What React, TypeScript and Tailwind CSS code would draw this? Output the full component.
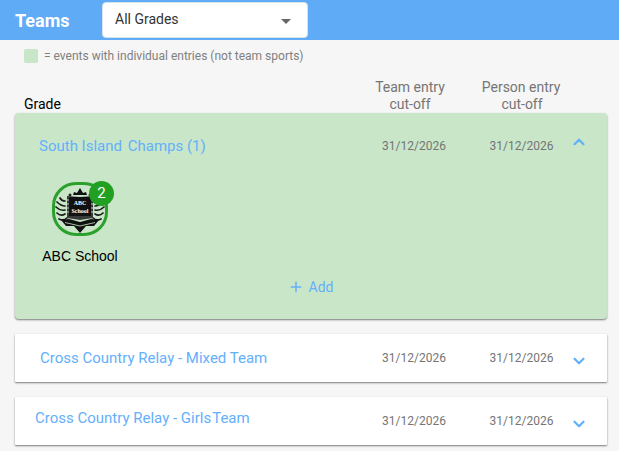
import React from "react";
import { ChevronDown, ChevronUp, Plus } from "lucide-react";

const Crest = () => (
  <svg width="50" height="48" viewBox="0 0 50 48" className="absolute left-[0px] top-[3px]">
    {/* crown */}
    <path d="M18 7 L19 4 L22 5 L25 0 L28 5 L31 4 L32 7Z" fill="#111" />
    <circle cx="15" cy="7" r="1.5" fill="#222" />
    <circle cx="35" cy="7" r="1.5" fill="#222" />
    {/* wings */}
    <g stroke="#1a1a1a" strokeWidth="1.7" fill="none" strokeLinecap="round">
      <path d="M10 13 C7 13 6 12 5 10" />
      <path d="M10 18 C6 18 4 16 2 14" />
      <path d="M10 22 C6 23 4 22 1 19" />
      <path d="M10 26 C7 28 4 27 2 25" />
      <path d="M12 30 C9 33 6 32 4 31" />
      <path d="M40 13 C43 13 44 12 45 10" />
      <path d="M40 18 C44 18 46 16 48 14" />
      <path d="M40 22 C44 23 46 22 49 19" />
      <path d="M40 26 C43 28 46 27 48 25" />
      <path d="M38 30 C41 33 44 32 46 31" />
    </g>
    {/* book pages */}
    <path d="M12 8 L25 9 L38 8 L38 30 L25 32 L12 30Z" fill="#3a3a3a" />
    <path d="M11 12 L14 12 M11 16 L14 16 M11 20 L14 20 M11 24 L14 24 M36 12 L39 12 M36 16 L39 16 M36 20 L39 20 M36 24 L39 24" stroke="#c9e6c9" strokeWidth="0.9" />
    <rect x="14" y="9" width="22" height="19" fill="#111" />
    {/* shield and ribbon */}
    <path d="M6 32 L14 31 L25 34 L36 31 L44 32 L39 38 L31 38 L25 45 L19 38 L11 38Z" fill="#111" />
    <path d="M10 34.5 L25 38 L40 34.5" stroke="#c9e6c9" strokeWidth="0.8" fill="none" />
    <text x="25" y="16.5" textAnchor="middle" fontSize="6" fontWeight="700" fill="#fff" fontFamily="Liberation Serif, serif">ABC</text>
    <text x="25" y="24.5" textAnchor="middle" fontSize="6" fontWeight="700" fill="#fff" fontFamily="Liberation Serif, serif">School</text>
  </svg>
);

const dates = "31/12/2026";

function Dates() {
  return (
    <>
      <span className="absolute left-[367px] w-[64px] text-[12px] leading-[16px] text-[#757575] text-center">{dates}</span>
      <span className="absolute left-[474.5px] w-[64px] text-[12px] leading-[16px] text-[#757575] text-center">{dates}</span>
    </>
  );
}

function ClosedCard({ title, titleClass }: { title: React.ReactNode; titleClass: string }) {
  return (
    <div className="relative h-[48px] bg-white rounded-[1px] shadow-[0_1px_2px_rgba(0,0,0,0.5)] flex items-center">
      <span className={`text-[15px] leading-[20px] text-[#64b0fb] ${titleClass}`}>{title}</span>
      <div className="absolute inset-x-0 top-[2px] h-[44px] flex items-center">
        <Dates />
      </div>
      <ChevronDown className="absolute left-[555px] top-[18px] text-[#64b0fb]" size={18} strokeWidth={3} />
    </div>
  );
}

export default function App() {
  return (
    <div className="w-[619px] h-[451px] overflow-hidden bg-[#f6f6f6] font-['Roboto',sans-serif]">
      <header className="h-[40px] bg-[#5fabf6] flex items-center">
        <h1 className="ml-[15px] w-[87px] text-[18px] font-bold text-white">Teams</h1>
        <div className="w-[206px] h-[36px] bg-white rounded-[4px] border border-[#d8e2ec] flex items-center justify-between pl-[12px] pr-[16px]">
          <span className="text-[14px] leading-[18px] -mt-[2px] text-[#333]">All Grades</span>
          <span className="w-0 h-0 mt-[2px] border-x-[5px] border-x-transparent border-t-[5px] border-t-[#666]" />
        </div>
      </header>

      <div className="flex items-center gap-[6px] pl-[24px] mt-[9px] h-[14px]">
        <span className="w-[14px] h-[14px] rounded-[2px] bg-[#c9e6c9]" />
        <span className="text-[12px] text-[#808080]">= events with individual entries (not team sports)</span>
      </div>

      <div className="relative h-[50px] text-[14px] leading-[17px]">
        <span className="absolute left-[24px] top-[33px] text-black">Grade</span>
        <span className="absolute left-[360px] top-[16px] w-[100px] text-center text-[#757575]">Team entry<br />cut-off</span>
        <span className="absolute left-[471px] top-[16px] w-[100px] text-center text-[#757575]">Person entry<br /><span className="ml-[2px]">cut-off</span></span>
      </div>

      <div className="ml-[15px] w-[592px] flex flex-col gap-[15px]">
        <section className="relative h-[206px] bg-[#c9e6c9] rounded-[4px] shadow-[0_1px_2px_rgba(0,0,0,0.5)]">
          <div className="relative h-[62px] pt-[4px] flex items-center">
            <span className="ml-[24px] text-[15px] leading-[20px] text-[#64b0fb]">South Island <span className="ml-[2px]">Champs (1)</span></span>
            <Dates />
            <ChevronUp className="absolute left-[555px] top-[20px] text-[#64b0fb]" size={18} strokeWidth={3} />
          </div>
          <div className="w-[130px] flex flex-col items-center">
            <div className="relative w-[56px] h-[54px] mt-[7px] rounded-[24px] border-[3px] border-[#2ca02c]">
              <Crest />
              <span className="absolute left-[34px] top-[-4px] w-[25px] h-[25px] rounded-full bg-[#22a022] text-white text-[15px] flex items-center justify-center">2</span>
            </div>
            <span className="mt-[11px] text-[14px] leading-[18px] text-black font-['Liberation_Sans',sans-serif]">ABC School</span>
          </div>
          <div className="mt-[13px] flex items-center justify-center gap-[5px] text-[#64b0fb] pr-[1px]">
            <Plus size={16} strokeWidth={2.2} />
            <span className="text-[14px] leading-[18px]">Add</span>
          </div>
        </section>

        <ClosedCard title="Cross Country Relay - Mixed Team" titleClass="ml-[25px]" />
        <ClosedCard
          title={<>Cross Country Relay - Girls<span className="ml-[1px]">Team</span></>}
          titleClass="ml-[20px] -mt-[6px]"
        />
      </div>
    </div>
  );
}
